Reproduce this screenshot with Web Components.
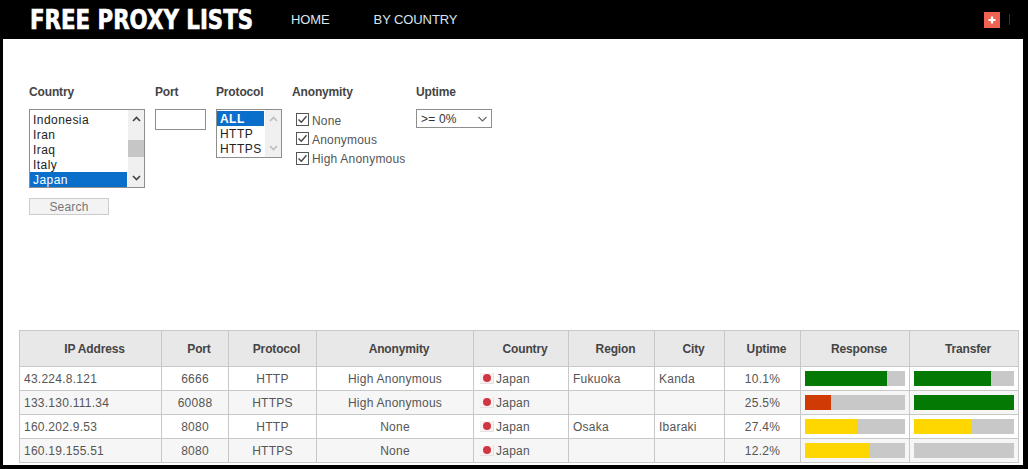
<!DOCTYPE html>
<html lang="en"><head><meta charset="utf-8"><title>Free Proxy Lists</title>
<style>
html,body{margin:0;padding:0;background:#000;height:469px;overflow:hidden;font-family:"Liberation Sans",Arial,sans-serif;}
</style></head><body>
<proxy-page>
  <site-header slot="header"></site-header>
  <search-form slot="form"></search-form>
  <proxy-table slot="table"></proxy-table>
</proxy-page>
<script>
const up='<svg width="9" height="6" viewBox="0 0 9 6"><path d="M1 5L4.5 1.5L8 5" fill="none" stroke="currentColor" stroke-width="1.6"/></svg>';
const down='<svg width="9" height="6" viewBox="0 0 9 6"><path d="M1 1L4.5 4.5L8 1" fill="none" stroke="currentColor" stroke-width="1.6"/></svg>';
const downThin='<svg width="9" height="6" viewBox="0 0 9 6"><path d="M.5 1L4.5 5L8.5 1" fill="none" stroke="currentColor" stroke-width="1.1"/></svg>';
function def(name,html,init){
  customElements.define(name,class extends HTMLElement{
    connectedCallback(){
      if(this.shadowRoot)return;
      const s=this.attachShadow({mode:'open'});
      s.innerHTML=typeof html==='function'?html(this):html;
      if(init)init(s,this);
    }
  });
}
def('proxy-page',`<style>
:host{display:block;width:1028px;height:469px;background:#000}
.main{margin:0 5px 0 3px;height:426px;background:#fff;box-sizing:border-box;display:flex;flex-direction:column;justify-content:space-between;padding:0 0 2px 0}
</style><slot name="header"></slot><div class="main"><slot name="form"></slot><slot name="table"></slot></div>`);

def('site-header',`<style>
:host{display:flex;align-items:center;height:39px;background:#000;color:#d9e6f2}
.logo{width:261px;margin-left:30px;flex:none}
.logo span{display:inline-block;font:800 27px/39px "DejaVu Sans",sans-serif;color:#fff;white-space:nowrap;transform:scaleX(.79);transform-origin:0 50%;-webkit-text-stroke:.7px #fff}
nav{display:flex;gap:44px;font:13px/39px "Liberation Sans",sans-serif;letter-spacing:-.1px}
.end{margin-left:auto;display:flex;align-items:center;margin-right:18px;gap:9px}
.plus{width:16px;height:16px;background:#ee6352;display:flex;align-items:center;justify-content:center}
.sep{width:1px;height:11px;background:#333}
</style><div class="logo"><span>FREE PROXY LISTS</span></div><nav><span>HOME</span><span>BY COUNTRY</span></nav>
<div class="end"><div class="plus"><svg width="8" height="8" viewBox="0 0 8 8"><path d="M4 .5V7.5M.5 4H7.5" stroke="#fff" stroke-width="2.2"/></svg></div><div class="sep"></div></div>`);

def('field-col',h=>`<style>
:host{display:flex;flex-direction:column;align-items:flex-start}
.l{font:bold 12px/14px "Liberation Sans",sans-serif;color:#444;height:24px;padding-top:1px;letter-spacing:-.15px}
</style><div class="l">${h.getAttribute('label')}</div><slot></slot>`);

def('list-box',h=>{
  const items=h.getAttribute('items').split(',');
  const sel=h.getAttribute('sel');
  const dim=h.hasAttribute('dim');
  const w=h.getAttribute('w');
  const bold=h.hasAttribute('boldsel');
  const pt=h.getAttribute('pt');
  return `<style>
:host{display:flex;width:${w}px;box-sizing:border-box;border:1px solid #8e8e8e;background:#fff}
.opts{flex:1;display:flex;flex-direction:column;padding:${pt}px 0 ${dim?1:0}px}
.o{font:12px/16px "Liberation Sans",sans-serif;color:#222;padding-left:3px;height:15px;letter-spacing:.45px;white-space:nowrap}
.o.s{background:#0a6fca;color:#fff}
.o.s.b{font-weight:bold}
.bar{width:16px;margin-left:1px;background:#f0f0f0;display:flex;flex-direction:column;align-items:center;justify-content:space-between;padding:6px 0;box-sizing:border-box;color:${dim?'#bdbdbd':'#444'};position:relative}
.thumb{position:absolute;left:0;right:0;top:30px;height:17px;background:#c6c6c6}
</style><div class="opts">${items.map(i=>`<div class="o ${i===sel?'s':''} ${bold?'b':''}">${i}</div>`).join('')}</div>
<div class="bar">${up}${dim?'':'<div class="thumb"></div>'}${down}</div>`});

def('text-input',`<style>:host{display:block;width:51px;height:21px;box-sizing:border-box;border:1px solid #8e8e8e;background:#fff}</style>`);

def('check-row',h=>`<style>
:host{display:flex;align-items:flex-start;height:${h.getAttribute('rh')}px;padding-left:4px;font:12px/15px "Liberation Sans",sans-serif;color:#555;letter-spacing:.2px;white-space:nowrap}
.b{width:13px;height:13px;box-sizing:border-box;border:1px solid #555;background:#fff;margin-right:3px;display:flex;flex:none}
span{margin-top:${h.getAttribute('dy')||0}px}
</style><div class="b"><svg width="11" height="11" viewBox="0 0 11 11"><path d="M1.5 5.5L4.3 8.3L9.5 2.2" fill="none" stroke="#444" stroke-width="1.4"/></svg></div><span>${h.getAttribute('label')}</span>`);

def('drop-select',`<style>
:host{display:flex;align-items:center;justify-content:space-between;width:76px;height:19px;box-sizing:border-box;border:1px solid #8e8e8e;background:#fff;padding:1px 4px 0 4px;font:12px/17px "Liberation Sans",sans-serif;color:#333;letter-spacing:.2px;white-space:nowrap}
svg{color:#666}
</style><span><slot></slot></span>${downThin}`);

def('search-button',`<style>
:host{display:block;width:80px;height:17px;box-sizing:border-box;border:1px solid #ccc;background:#f3f3f3;text-align:center;font:12px/17px "Liberation Sans",sans-serif;color:#777;letter-spacing:.2px}
</style><slot></slot>`);

def('search-form',`<style>
:host{display:flex;padding:45px 0 0 26px;align-items:flex-start}
.c{display:flex;flex-direction:column;gap:10px}
.g{display:flex;flex-direction:column;margin-top:4px}
</style>
<field-col label="Country" style="width:126px"><div class="c"><list-box w="116" pt="2" sel="Japan" items="Indonesia,Iran,Iraq,Italy,Japan"></list-box><search-button>Search</search-button></div></field-col>
<field-col label="Port" style="width:61px"><text-input></text-input></field-col>
<field-col label="Protocol" style="width:76px"><list-box w="66" pt="1" sel="ALL" dim boldsel items="ALL,HTTP,HTTPS"></list-box></field-col>
<field-col label="Anonymity" style="width:124px"><div class="g"><check-row label="None" dy="1" rh="19"></check-row><check-row label="Anonymous" dy="1" rh="20"></check-row><check-row label="High Anonymous" dy="0" rh="19"></check-row></div></field-col>
<field-col label="Uptime"><drop-select>&gt;= 0%</drop-select></field-col>`);

def('jp-flag',`<style>:host{display:inline-flex;width:14px;height:11px;background:#f7f3f3;align-items:center;justify-content:center;margin:0 2px 0 0;vertical-align:1px;box-sizing:border-box;border-right:1px solid #e2e2e2;border-bottom:1px solid #e2e2e2}
i{display:block;width:8px;height:8px;border-radius:50%;background:#d1353f}</style><i></i>`);

def('meter-bar',h=>{
  const v=h.getAttribute('value'),c=h.getAttribute('color');
  return `<style>:host{display:block;height:15px;background:#c8c8c8}
div{height:100%;width:${v}%;background:${c}}</style><div></div>`});

const G='#047a04',R='#cf3a05',Y='#ffd700';
const rows=[
 ['43.224.8.121','6666','HTTP','High Anonymous','Fukuoka','Kanda','10.1%',[82,G],[77,G]],
 ['133.130.111.34','60088','HTTPS','High Anonymous','','','25.5%',[26,R],[100,G]],
 ['160.202.9.53','8080','HTTP','None','Osaka','Ibaraki','27.4%',[52,Y],[58,Y]],
 ['160.19.155.51','8080','HTTPS','None','','','12.2%',[64,Y],[0,G]],
];
const widths=[142,67,88,157,95,86,70,76,109,109];
const heads=['IP Address','Port','Protocol','Anonymity','Country','Region','City','Uptime','Response','Transfer'];
def('proxy-table',`<style>
:host{display:block;margin:0 0 0 16px;width:1000px}
table{border-collapse:collapse;table-layout:fixed;width:1000px;font:12px/16px "Liberation Sans",sans-serif;color:#555;letter-spacing:.25px}
th,td{border:1px solid #c8c8c8;padding:0 4px;box-sizing:border-box;white-space:nowrap;overflow:hidden}
th{height:36px;background:#e8e8e8;font-weight:bold;color:#444;letter-spacing:-.15px;padding:0 0 0 8px}
td{height:24px;text-align:center}
tr:nth-child(even) td{background:#f6f6f6}
td.l{text-align:left;padding-left:4px}
td.c{padding-left:6px}
td.m{padding:0 4px}
</style><table><colgroup>${widths.map(w=>`<col style="width:${w}px">`).join('')}</colgroup>
<thead><tr>${heads.map(x=>`<th>${x}</th>`).join('')}</tr></thead>
<tbody>${rows.map(r=>`<tr><td class="l">${r[0]}</td><td>${r[1]}</td><td>${r[2]}</td><td>${r[3]}</td><td class="l c"><jp-flag></jp-flag>Japan</td><td class="l">${r[4]}</td><td class="l">${r[5]}</td><td>${r[6]}</td><td class="m"><meter-bar value="${r[7][0]}" color="${r[7][1]}"></meter-bar></td><td class="m"><meter-bar value="${r[8][0]}" color="${r[8][1]}"></meter-bar></td></tr>`).join('')}</tbody></table>`);
</script>
</body></html>
